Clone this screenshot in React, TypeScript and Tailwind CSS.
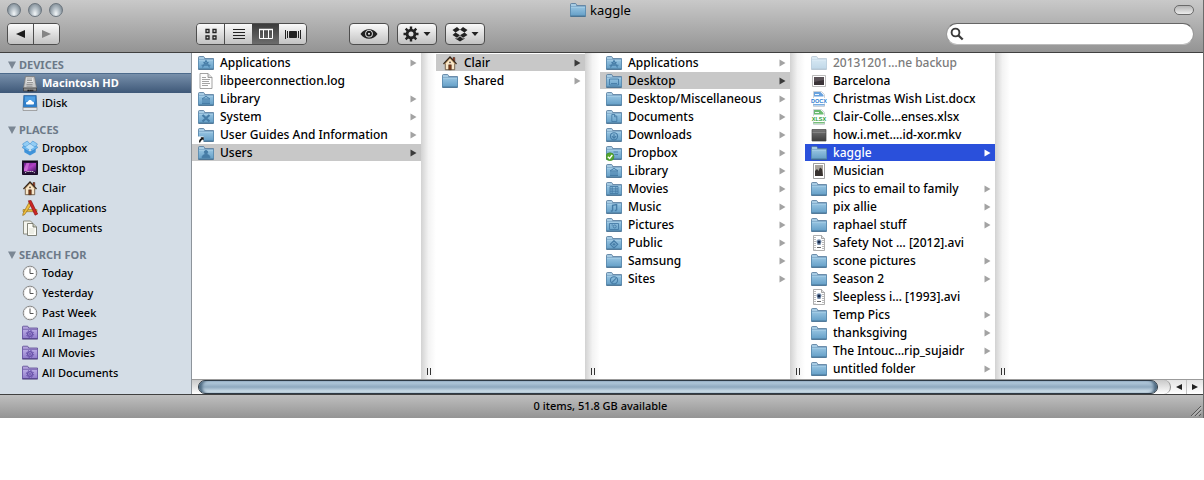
import type { ReactNode } from "react";

type FolderGlyph =
  | "apps" | "library" | "system" | "users" | "desktop" | "docs" | "downloads"
  | "movies" | "music" | "pictures" | "public" | "sites" | "alias" | "check" | "none";

const folderGlyphs: Record<FolderGlyph, ReactNode> = {
  none: null,
  apps: <path d="M4.500 12.500L8 5.500l3.500 7M3.500 10.200h9M5.500 7.200L8 9.200l2.500-2" strokeWidth="1.100" />,
  library: <path d="M4 8l4-2.700L12 8zM5 8.500v4M7 8.500v4M9 8.500v4M11 8.500v4M4 12.500h8" strokeWidth="1" />,
  system: <path d="M4.500 6l7 6.500M11.500 6l-7 6.500" strokeWidth="2.200" />,
  users: <path d="M8 5.500a1.700 1.700 0 1 1 0 3.400a1.700 1.700 0 0 1 0-3.400zM4 12.700c0-4.500 8-4.500 8 0z" fill="#467ca6" />,
  desktop: <path d="M3.500 6h9v6h-9zM5 10.500h6" />,
  docs: <path d="M5.800 5.500h3l2 2v5h-5zM8.500 5.500v2.300h2.300" />,
  downloads: <path d="M8 5.700a3.600 3.600 0 1 1 0 7.200a3.600 3.600 0 0 1 0-7.200zM8 7v4M5.900 9.200L8 11.300l2.100-2.100" strokeWidth="1.100" />,
  movies: <path d="M4 5.500h8v7H4zM6.200 5.500v7M9.800 5.500v7M4 7.900h8M4 10.200h8" />,
  music: <path d="M6.600 11.800V6.300l4-.8v5.800M4.800 12h1.800M8.800 11.500h1.800" strokeWidth="1.400" />,
  pictures: <path d="M3.500 6.500h9v6h-9zM5.500 8h1.500M8.700 8a1.500 1.500 0 1 1 0 3a1.500 1.500 0 0 1 0-3z" />,
  public: <path d="M8 5.700l3.700 3.600L8 13 4.300 9.300zM8 7.800v3M6.500 9.300h3" strokeWidth="1.200" />,
  sites: <path d="M8 5.700a3.600 3.600 0 1 1 0 7.200a3.600 3.600 0 0 1 0-7.200zM6 11.300l4-4" strokeWidth="1.100" />,
  alias: null,
  check: <path d="M7.500 7h4.500M8.500 9.500h3.500" />,
};

function Folder({ glyph = "none", dim = false }: { glyph?: FolderGlyph; dim?: boolean }) {
  return (
    <svg viewBox="0 0 16 16" className={dim ? "size-4 shrink-0 opacity-40" : "size-4 shrink-0"} aria-hidden="true">
      <path d="M.500 14V2.500q0-1 1-1h3.800q.7 0 1 .7l.4 1.300h8.800V14z" fill="#8ab8d6" stroke="#56799a" strokeWidth=".8" />
      <path d="M1 3h5" stroke="#c3def0" strokeWidth="1" />
      <path d="M.500 4.500h15v9.300H.500z" fill="url(#folder-face)" stroke="#5a8bb0" strokeWidth=".8" />
      <path d="M1 5h14" stroke="#b6d7ec" strokeWidth=".8" />
      <path d="M.300 14.300h15.400" stroke="#3f6b8e" strokeWidth="1" />
      <g fill="none" stroke="#467ca6" strokeWidth=".9">{folderGlyphs[glyph]}</g>
      {glyph === "alias" && (
        <g>
          <path d="M0 9.500h5.500V16H0z" fill="#fff" />
          <path d="M1 15.500c0-2.500.8-3.500 2.300-4.200L2.500 10.300h3.200v3.200l-1-1c-1.300.7-2 1.600-2.500 3z" fill="#111" />
        </g>
      )}
      {glyph === "check" && (
        <g>
          <circle cx="4" cy="11.700" r="4" fill="#55a630" stroke="#3b8420" strokeWidth=".5" />
          <path d="M1.800 11.800l1.800 1.700 2.700-3.500" fill="none" stroke="#fff" strokeWidth="1.400" />
        </g>
      )}
    </svg>
  );
}

function Svg({ children }: { children: ReactNode }) {
  return <svg viewBox="0 0 16 16" className="size-4 shrink-0" aria-hidden="true">{children}</svg>;
}

const HomeIcon = () => (
  <Svg>
    <path d="M11 2.500h1.800v4H11z" fill="#a33b22" stroke="#3c2a1c" strokeWidth=".5" />
    <path d="M3.300 8L8 3l4.700 5v6.700H3.300z" fill="#f8e6c8" stroke="#5d4a34" strokeWidth=".8" />
    <path d="M1.500 9L8 2l6.500 7" fill="none" stroke="#33261b" strokeWidth="1.300" />
    <path d="M2.500 9.300L8 3.500l5.500 5.800" fill="none" stroke="#dcaa6c" strokeWidth=".7" />
    <path d="M6.700 9.800h2.600v4.900H6.700z" fill="#7d3b1a" stroke="#3f2412" strokeWidth=".5" />
    <circle cx="8" cy="7.300" r=".9" fill="#5a4a3c" />
  </Svg>
);

const LogIcon = () => (
  <Svg>
    <path d="M2 .500h8l4 4v11H2z" fill="#fdfdfd" stroke="#999" strokeWidth=".9" />
    <path d="M10 .500v4h4" fill="#ddd" stroke="#888" strokeWidth=".8" />
    <path d="M4 4.500h4M4 6.500h8M4 8.500h7M4 10.500h8M4 12.500h6" stroke="#8d8d8d" strokeWidth=".8" />
  </Svg>
);

function OfficeIcon({ color, label }: { color: string; label: string }) {
  return (
    <Svg>
      <path d="M2.500.500h8l3 3v12h-11z" fill="#fff" stroke="#c2c8ce" strokeWidth=".8" />
      <path d="M3 1h6.500l3 3v1.500H3z" fill={color} opacity=".7" />
      <path d="M4 3.500h4" stroke="#fff" strokeWidth=".9" />
      <path d="M.500 7h15v5.500H.500z" fill="#fff" />
      <text x="8" y="11.800" textAnchor="middle" fontSize="5.500" fontWeight="700" fontFamily="Liberation Sans, sans-serif" fill={color}>{label}</text>
      <path d="M2.500 13.800h11" stroke={color} strokeWidth="1.200" opacity=".8" />
    </Svg>
  );
}

const ScreenPhotoIcon = () => (
  <Svg>
    <path d="M1.500 2.500h13v11h-13z" fill="#fff" stroke="#aaa" strokeWidth=".8" />
    <path d="M3 4h10v8H3z" fill="#3b3438" />
    <path d="M3 4h10v3L3 9z" fill="#595156" />
  </Svg>
);

const MkvIcon = () => (
  <Svg>
    <path d="M1 2.500h14v11.500H1z" fill="url(#mkv-face)" stroke="#444" strokeWidth=".7" />
    <path d="M1.500 5.500h13" stroke="#8a8a8a" strokeWidth=".8" />
  </Svg>
);

const MusicianIcon = () => (
  <Svg>
    <path d="M2.500.500h11v15h-11z" fill="#fff" stroke="#888" strokeWidth=".8" />
    <path d="M4 2h8v11H4z" fill="#a9a49c" />
    <path d="M4 13V8l2-2 1.500 2L9 4.500 11 6l1 7z" fill="#37322f" />
  </Svg>
);

const AviIcon = () => (
  <Svg>
    <path d="M2.500.500h8l3 3v12h-11z" fill="#fff" stroke="#999" strokeWidth=".8" />
    <path d="M10.500.500v3h3" fill="#ddd" stroke="#888" strokeWidth=".7" />
    <path d="M4 2v12.500M12 5v9.500" stroke="#777" strokeWidth="1" strokeDasharray="1 1" />
    <path d="M5.500 6.500c0-3 5-3 5 0L9.500 10h-3z" fill="#7d93b0" />
    <circle cx="8" cy="7" r="1.500" fill="#16294a" />
    <path d="M6 12.500h4" stroke="#666" strokeWidth="1" />
  </Svg>
);

const DiskIcon = () => (
  <Svg>
    <path d="M3.500.500h9l2 11.500h-13z" fill="#c9c9c9" stroke="#777" strokeWidth=".7" />
    <path d="M4.500 2h6.500l.5 5h-7z" fill="#e6e6e6" />
    <path d="M5 3h5M5 4.500h5M5 6.500h6M4.500 8.500h6M4.500 10.200h6" stroke="#888" strokeWidth=".8" />
    <path d="M1.500 12h13v3h-13z" fill="#8c8c8c" stroke="#333" strokeWidth=".6" />
    <path d="M5.500 14.500h6" stroke="#111" strokeWidth="1.600" strokeDasharray="1.400 .5" />
  </Svg>
);

const IDiskIcon = () => (
  <Svg>
    <path d="M1.800.500h12.400l.6 12H1.200z" fill="#2e7fcb" stroke="#27619a" strokeWidth=".7" />
    <path d="M3 1.500h10v5H3z" fill="#4f9fe2" />
    <path d="M4.500 9.500c-1.300-1.800.2-3.200 1.400-2.800.6-2.500 3.800-2.300 4.300-.1 1.700-.2 2.500 1.700 1.300 2.900z" fill="#fff" />
    <path d="M1 12.500h14v3H1z" fill="#e4e7ea" stroke="#888" strokeWidth=".7" />
  </Svg>
);

const DropboxColorIcon = () => (
  <Svg>
    <path d="M2.300 8L8 11.500 13.700 8v4.200L8 15.500l-5.700-3.300z" fill="#3f93da" />
    <path d="M8 8l5.500-3.200L15.800 7.500 10.500 11zM8 8L2.500 4.800.200 7.500 5.500 11z" fill="#6db8f0" stroke="#2877bb" strokeWidth=".5" />
    <path d="M8 4L5.300 1 .500 4l2.500 3zM8 4l2.700-3 4.800 3L13 7z" fill="#92cdf5" stroke="#2f83c8" strokeWidth=".5" />
    <path d="M8 4.200L12.500 7 8 10 3.500 7z" fill="#b9e0fa" />
  </Svg>
);

const DesktopIcon = () => (
  <Svg>
    <path d="M.500 1.500h15v13H.500z" fill="#251138" stroke="#180b25" />
    <path d="M2 3h12v8.500H2z" fill="url(#desk-face)" />
    <path d="M4.500 3l3 0L5 11H2V9z" fill="#e58be9" opacity=".6" />
    <path d="M3 13l2-1.500h6L13 13" fill="none" stroke="#ddd" strokeDasharray="1.200 .7" />
    <path d="M0 1h16" stroke="#08040f" />
  </Svg>
);

const AppsIcon = () => (
  <Svg>
    <path d="M1 9.500h14v2.200H1z" fill="#e2bb45" stroke="#8d6c14" strokeWidth=".5" />
    <path d="M7.500 1.500L1 13.500l-.3 2 2-1L10 3.500z" fill="#f0bf3f" stroke="#8a6210" strokeWidth=".6" />
    <path d="M6.300.800l2.800-.3L15.700 14l-2.700 1.200z" fill="#cc2523" stroke="#821110" strokeWidth=".6" />
  </Svg>
);

const DocumentsIcon = () => (
  <Svg>
    <path d="M1.500 1h7l2 2v11h-9z" fill="#f3f4ee" stroke="#77796b" strokeWidth=".8" />
    <path d="M5.500 3.500H11l3.500 3.500v8.500h-9z" fill="#fcfcf6" stroke="#66685c" strokeWidth=".8" />
    <path d="M11 3.500V7h3.500" fill="#c8cabb" stroke="#66685c" strokeWidth=".8" />
    <path d="M7 9h5.500M7 11h5.500M7 13h5" stroke="#d0d2c6" strokeWidth=".7" />
  </Svg>
);

const ClockIcon = () => (
  <Svg>
    <circle cx="8" cy="8" r="6.800" fill="#fff" stroke="#858585" strokeWidth="1" />
    <circle cx="8" cy="8" r="5.800" fill="none" stroke="#d9d9d9" strokeWidth=".6" />
    <path d="M8 3.500v5h3.500" fill="none" stroke="#555" strokeWidth="1" />
  </Svg>
);

const SmartFolderIcon = () => (
  <Svg>
    <path d="M.500 13.500V2q0-.8.800-.8h4q.7 0 1 .8l.3 1h8.900v10.500z" fill="#b1a1dc" stroke="#5b4a92" strokeWidth=".8" />
    <path d="M.500 4.300h15v9.200H.500z" fill="url(#smart-face)" stroke="#6a58a5" strokeWidth=".8" />
    <path d="M.300 14h15.400" stroke="#463677" />
    <circle cx="8" cy="9" r="2.400" fill="none" stroke="#6852a8" strokeWidth="1.300" />
    <circle cx="8" cy="9" r="3.600" fill="none" stroke="#6852a8" strokeWidth="1" strokeDasharray="1.400 1.420" />
    <circle cx="8" cy="9" r=".9" fill="#6852a8" />
  </Svg>
);

type Entry = { name: string; icon: ReactNode; leaf?: boolean; selected?: "path" | "active"; dim?: boolean };
const plain = <Folder />;

const columns: { id: string; width: string; entries: Entry[] }[] = [
  {
    id: "Macintosh HD",
    width: "w-[229px]",
    entries: [
      { name: "Applications", icon: <Folder glyph="apps" /> },
      { name: "libpeerconnection.log", icon: <LogIcon />, leaf: true },
      { name: "Library", icon: <Folder glyph="library" /> },
      { name: "System", icon: <Folder glyph="system" /> },
      { name: "User Guides And Information", icon: <Folder glyph="alias" /> },
      { name: "Users", icon: <Folder glyph="users" />, selected: "path" },
    ],
  },
  {
    id: "Users",
    width: "w-[149px]",
    entries: [
      { name: "Clair", icon: <HomeIcon />, selected: "path" },
      { name: "Shared", icon: plain },
    ],
  },
  {
    id: "Clair",
    width: "w-[190px]",
    entries: [
      { name: "Applications", icon: <Folder glyph="apps" /> },
      { name: "Desktop", icon: <Folder glyph="desktop" />, selected: "path" },
      { name: "Desktop/Miscellaneous", icon: plain },
      { name: "Documents", icon: <Folder glyph="docs" /> },
      { name: "Downloads", icon: <Folder glyph="downloads" /> },
      { name: "Dropbox", icon: <Folder glyph="check" /> },
      { name: "Library", icon: <Folder glyph="library" /> },
      { name: "Movies", icon: <Folder glyph="movies" /> },
      { name: "Music", icon: <Folder glyph="music" /> },
      { name: "Pictures", icon: <Folder glyph="pictures" /> },
      { name: "Public", icon: <Folder glyph="public" /> },
      { name: "Samsung", icon: plain },
      { name: "Sites", icon: <Folder glyph="sites" /> },
    ],
  },
  {
    id: "Desktop",
    width: "w-[190px]",
    entries: [
      { name: "20131201…ne backup", icon: <Folder dim />, leaf: true, dim: true },
      { name: "Barcelona", icon: <ScreenPhotoIcon />, leaf: true },
      { name: "Christmas Wish List.docx", icon: <OfficeIcon color="#2a7bd0" label="DOCX" />, leaf: true },
      { name: "Clair-Colle…enses.xlsx", icon: <OfficeIcon color="#2c9c33" label="XLSX" />, leaf: true },
      { name: "how.i.met.…id-xor.mkv", icon: <MkvIcon />, leaf: true },
      { name: "kaggle", icon: plain, selected: "active" },
      { name: "Musician", icon: <MusicianIcon />, leaf: true },
      { name: "pics to email to family", icon: plain },
      { name: "pix allie", icon: plain },
      { name: "raphael stuff", icon: plain },
      { name: "Safety Not … [2012].avi", icon: <AviIcon />, leaf: true },
      { name: "scone pictures", icon: plain },
      { name: "Season 2", icon: plain },
      { name: "Sleepless i… [1993].avi", icon: <AviIcon />, leaf: true },
      { name: "Temp Pics", icon: plain },
      { name: "thanksgiving", icon: plain },
      { name: "The Intouc…rip_sujaidr", icon: plain },
      { name: "untitled folder", icon: plain },
    ],
  },
];

const sections: { title: string; items: { name: string; icon: ReactNode; selected?: boolean }[] }[] = [
  { title: "DEVICES", items: [{ name: "Macintosh HD", icon: <DiskIcon />, selected: true }, { name: "iDisk", icon: <IDiskIcon /> }] },
  {
    title: "PLACES",
    items: [
      { name: "Dropbox", icon: <DropboxColorIcon /> },
      { name: "Desktop", icon: <DesktopIcon /> },
      { name: "Clair", icon: <HomeIcon /> },
      { name: "Applications", icon: <AppsIcon /> },
      { name: "Documents", icon: <DocumentsIcon /> },
    ],
  },
  {
    title: "SEARCH FOR",
    items: [
      { name: "Today", icon: <ClockIcon /> },
      { name: "Yesterday", icon: <ClockIcon /> },
      { name: "Past Week", icon: <ClockIcon /> },
      { name: "All Images", icon: <SmartFolderIcon /> },
      { name: "All Movies", icon: <SmartFolderIcon /> },
      { name: "All Documents", icon: <SmartFolderIcon /> },
    ],
  },
];

function SharedGradients() {
  return (
    <svg className="absolute size-0" aria-hidden="true">
      <defs>
        <linearGradient id="folder-face" x1="0" y1="0" x2="0" y2="1"><stop offset="0" stopColor="#98c5e2" /><stop offset="1" stopColor="#659fc7" /></linearGradient>
        <linearGradient id="smart-face" x1="0" y1="0" x2="0" y2="1"><stop offset="0" stopColor="#bdaee6" /><stop offset="1" stopColor="#8f7bca" /></linearGradient>
        <linearGradient id="mkv-face" x1="0" y1="0" x2="0" y2="1"><stop offset="0" stopColor="#777" /><stop offset="1" stopColor="#3c3c3c" /></linearGradient>
        <linearGradient id="desk-face" x1="0" y1="0" x2="1" y2="1"><stop offset="0" stopColor="#6d1c8c" /><stop offset=".5" stopColor="#b040c4" /><stop offset="1" stopColor="#451466" /></linearGradient>
      </defs>
    </svg>
  );
}

const barButton =
  "flex h-[22px] items-center justify-center rounded-[4px] border border-[#4e4e4e] bg-linear-to-b from-[#fafafa] to-[#c2c2c2] text-[#222]";
const segment = "flex h-full flex-1 items-center justify-center";
const segmentLight = "bg-linear-to-b from-[#fafafa] to-[#c2c2c2] text-[#222]";

const Caret = () => <svg viewBox="0 0 8 4" className="h-1 w-2" aria-hidden="true"><path d="M.500 0h7L4 4z" fill="currentColor" /></svg>;

function TitleBar() {
  return (
    <header className="border-b border-[#404040] bg-linear-to-b from-[#c9c9c9] to-[#949494]">
      <div className="grid h-5 grid-cols-[1fr_auto_1fr] items-center pr-[9px] pl-[7px]">
        <div className="flex gap-[7px]">
          {["Close", "Minimize", "Zoom"].map((label) => (
            <button key={label} aria-label={label} className="size-[14px] rounded-full border border-[#6b757e] bg-radial-[at_50%_80%] from-[#f2f6f8] via-[#a9b4bc] to-[#64707a]" />
          ))}
        </div>
        <h1 className="flex items-center gap-1 text-[13px] leading-4 text-black"><Folder />kaggle</h1>
        <button aria-label="Toggle toolbar" className="h-2.5 w-5 justify-self-end rounded-full border border-[#6a6a6a] bg-linear-to-b from-[#b5b5b5] to-[#ececec]" />
      </div>
      <div className="flex h-8 items-start pr-[9px] pl-[7px] pt-[3px]">
        <div className="flex h-[22px] w-[53px] overflow-hidden rounded-[4px] border border-[#4e4e4e]">
          <button aria-label="Back" className={`${segment} ${segmentLight} border-r border-[#4e4e4e]`}>
            <svg viewBox="0 0 9 8" className="h-2 w-[9px]"><path d="M0 4l9-4v8z" fill="#1c1c1c" /></svg>
          </button>
          <button aria-label="Forward" className={`${segment} ${segmentLight}`}>
            <svg viewBox="0 0 9 8" className="h-2 w-[9px]"><path d="M9 4L0 0v8z" fill="#858585" /></svg>
          </button>
        </div>
        <div className="ml-[136px] flex h-[22px] w-[111px] overflow-hidden rounded-[4px] border border-[#4e4e4e]">
          <button aria-label="Icon view" className={`${segment} ${segmentLight} border-r border-[#4e4e4e]`}>
            <svg viewBox="0 0 12 12" className="size-3" fill="none" stroke="currentColor" strokeWidth="1.300"><path d="M1 1.500h3v3H1zM8 1.500h3v3H8zM1 8h3v3H1zM8 8h3v3H8z" /></svg>
          </button>
          <button aria-label="List view" className={`${segment} ${segmentLight}`}>
            <svg viewBox="0 0 12 12" className="size-3" stroke="currentColor"><path d="M0 1.500h12M0 4.500h12M0 7.500h12M0 10.500h12" /></svg>
          </button>
          <button aria-label="Column view" aria-pressed="true" className={`${segment} bg-linear-to-b from-[#3c3c3c] to-[#6c6c6c] text-white`}>
            <svg viewBox="0 0 14 12" className="h-3 w-3.5" fill="none" stroke="currentColor"><path d="M.500 1.500h13v9H.500zM4.500 1v10M9.500 1v10" /><path d="M0 1.500h14" strokeWidth="1.500" /></svg>
          </button>
          <button aria-label="Cover flow view" className={`${segment} ${segmentLight}`}>
            <svg viewBox="0 0 16 12" className="h-3 w-4" stroke="currentColor"><path d="M.500 2v9M2.500 3v7M13.500 3v7M15.500 2v9" /><path d="M4.500 3.500h7v6h-7z" fill="currentColor" /></svg>
          </button>
        </div>
        <button aria-label="Quick Look" className={`${barButton} ml-[42px] w-10`}>
          <svg viewBox="0 0 18 12" className="h-3 w-[18px]"><path d="M.500 6C4-.500 14-.500 17.500 6 14 12.300 4 12.300.500 6z" fill="#222" /><circle cx="9" cy="5.700" r="3.800" fill="#f1f1f1" /><circle cx="9" cy="5.700" r="2.900" fill="#1a1a1a" /><circle cx="9" cy="5.700" r="1" fill="#eee" /></svg>
        </button>
        <button aria-label="Action" className={`${barButton} ml-2 w-10 gap-1`}>
          <svg viewBox="0 0 16 16" className="size-4" fill="none" stroke="currentColor">
            <circle cx="8" cy="8" r="3.900" strokeWidth="2.800" />
            <path d="M8 .500v3M8 12.500v3M.500 8h3M12.500 8h3M2.700 2.700l2.100 2.100M11.200 11.200l2.100 2.100M2.700 13.300l2.100-2.100M11.200 4.800l2.100-2.100" strokeWidth="2.400" />
          </svg>
          <Caret />
        </button>
        <button aria-label="Dropbox" className={`${barButton} ml-2 w-10 gap-[3px]`}>
          <svg viewBox="0 0 16 16" className="size-4" fill="currentColor"><path d="M5 1L.500 4 3.500 6.500 8 3.700zM11 1l4.500 3-3 2.500L8 3.700zM.500 9l3-2.500L8 9.300 5 11.800zM15.500 9l-3-2.500L8 9.300l3 2.500zM3.500 11.700v1.100L8 15.500l4.500-2.700v-1.100L11 12.800l-3-2.500-3 2.500z" /></svg>
          <Caret />
        </button>
        <label className="ml-auto flex h-[22px] w-[248px] items-center rounded-full border border-t-[#666] border-x-[#999] border-b-[#bbb] bg-white pl-[3px]">
          <svg viewBox="0 0 14 14" className="size-3.5 shrink-0" fill="none" stroke="#3b3b3b"><circle cx="5.500" cy="5.500" r="3.900" strokeWidth="1.900" /><path d="M8.500 8.500l4.200 4" strokeWidth="2.300" /></svg>
          <input type="search" aria-label="Search" className="min-w-0 flex-1 bg-transparent px-1 text-[11px] outline-none" />
        </label>
      </div>
    </header>
  );
}

function Sidebar() {
  return (
    <nav className="flex w-48 shrink-0 flex-col gap-[9px] border-r border-[#8d949b] bg-[#d4dde6] pt-1">
      {sections.map((section) => (
        <section key={section.title}>
          <h2 className="flex h-4 items-center gap-[3px] pl-2 text-[11px] font-bold text-[#6c7988]">
            <svg viewBox="0 0 8 8" className="size-2" aria-hidden="true"><path d="M0 .500h8L4 8z" fill="#7b8794" /></svg>
            {section.title}
          </h2>
          <ul>
            {section.items.map((item) => (
              <li key={item.name}>
                <button
                  className={
                    item.selected
                      ? "flex h-5 w-full items-center gap-1 border-t border-[#4d6b8c] bg-linear-to-b from-[#7890ab] to-[#3e5878] pl-[22px] text-[11px] font-bold text-white"
                      : "flex h-5 w-full items-center gap-1 pl-[22px] text-[11px] font-medium text-black"
                  }
                >
                  {item.icon}
                  {item.name}
                </button>
              </li>
            ))}
          </ul>
        </section>
      ))}
    </nav>
  );
}

function Row({ entry }: { entry: Entry }) {
  const tone =
    entry.selected === "active" ? "bg-[#2a50db] text-white" : entry.selected === "path" ? "bg-[#c8c8c8] text-black" : entry.dim ? "text-[#7b7b7b]" : "text-black";
  const arrow = entry.selected === "active" ? "#fff" : entry.selected === "path" ? "#3a3a3a" : "#a3a3a3";
  return (
    <li className="pb-px">
      <button className={`flex h-[17px] w-full items-center gap-1.5 pr-1 pl-1.5 text-left text-[12px] leading-[17px] font-medium whitespace-nowrap ${tone}`}>
        {entry.icon}
        <span className="flex-1">{entry.name}</span>
        {!entry.leaf && (
          <svg viewBox="0 0 7 8" className="h-2 w-[7px] shrink-0" aria-hidden="true">
            <path d="M.500.500L6.500 4l-6 3.500z" fill={arrow} />
          </svg>
        )}
      </button>
    </li>
  );
}

function Divider() {
  return (
    <div className="flex w-[15px] shrink-0 items-end bg-linear-to-r from-[#d2d2d2] via-[#f3f3f3] to-white pb-1 pl-1.5">
      <span className="h-[7px] w-1 border-x border-[#333]" />
    </div>
  );
}

function Scrollbar() {
  return (
    <div className="flex h-[15px] border-t border-[#9b9b9b] bg-linear-to-b from-[#e4e4e4] to-white">
      <div className="flex flex-1 rounded-r-full border-r border-[#8f8f8f] bg-linear-to-b from-[#c9c9c9] to-white pr-3 pl-1.5">
        <div className="flex-1 rounded-full border border-[#2e3a45] bg-linear-to-b from-[#bcd2e3] via-[#8fa9bf] to-[#e4f1f8] shadow-[inset_4px_0_3px_-1px_#4d6980,inset_-4px_0_3px_-1px_#4d6980]" />
      </div>
      <button aria-label="Scroll left" className="flex w-4 items-center justify-center border-r border-[#c4c4c4]">
        <svg viewBox="0 0 6 6" className="size-1.5"><path d="M0 3l6-3v6z" fill="#222" /></svg>
      </button>
      <button aria-label="Scroll right" className="flex w-4 items-center justify-center">
        <svg viewBox="0 0 6 6" className="size-1.5"><path d="M6 3L0 0v6z" fill="#222" /></svg>
      </button>
    </div>
  );
}

export default function App() {
  return (
    <div className="min-h-screen bg-white">
      <SharedGradients />
      <main className="border-r border-[#6b6b6b] font-['Lucida_Grande','Noto_Sans',sans-serif]">
        <TitleBar />
        <div className="flex">
          <Sidebar />
          <div className="flex min-w-0 flex-1 flex-col">
            <div className="flex flex-1 overflow-hidden bg-white">
              {columns.map((column) => (
                <div key={column.id} className="flex shrink-0">
                  <ul aria-label={column.id} className={`${column.width} py-px`}>
                    {column.entries.map((entry) => (
                      <Row key={entry.name} entry={entry} />
                    ))}
                  </ul>
                  <Divider />
                </div>
              ))}
            </div>
            <Scrollbar />
          </div>
        </div>
        <footer className="flex h-6 items-center border-t border-[#404040] bg-linear-to-b from-[#bfbfbf] to-[#949494] text-[11px] font-medium text-black">
          <p className="flex-1 pl-3 text-center">0 items, 51.8 GB available</p>
          <svg viewBox="0 0 14 14" className="size-3.5 self-end" aria-hidden="true">
            <path d="M2 12L12 2M6 12l6-6M10 12l2-2" stroke="#555" strokeWidth="1" />
            <path d="M3 12.500l9.500-9.500M7 12.500l5.500-5.500" stroke="#ddd" strokeWidth=".6" />
          </svg>
        </footer>
      </main>
    </div>
  );
}
